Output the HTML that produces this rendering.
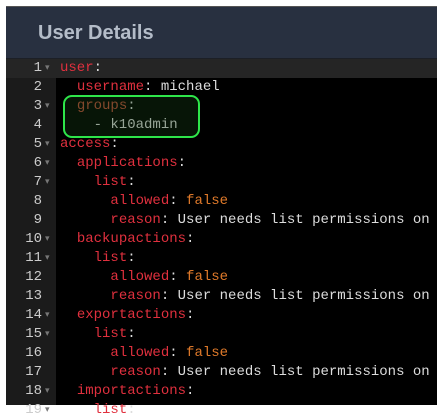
<!DOCTYPE html>
<html><head><style>
body{margin:0;background:#fff;width:437px;height:405px;overflow:hidden;position:relative;font-family:"Liberation Sans",sans-serif}
.p{position:absolute;left:6px;top:6px;right:0;bottom:0;background:#000;border-top:1px solid #555}
.h{height:51px;background:#283040;color:#b4bcc8;font-weight:bold;font-size:20px;line-height:52px;padding-left:32px;border-bottom:1px solid #1c1f26}
.g{position:absolute;left:0;top:52px;width:50px;bottom:0;background:#1b1b1b}
.c{position:absolute;left:0;top:52px;right:0;font-family:"Liberation Mono",monospace;font-size:14px}
.l{height:19px;line-height:19px;position:relative;white-space:pre;color:#ddd}
.l.a{background:#252525}
.n{position:absolute;left:0;width:36px;text-align:right;color:#ccc}
.f{position:absolute;left:39px;color:#777;font-size:9px}
.t{position:absolute;left:54px}
.k{color:#e0303e}.v{color:#e07a2a}.o{color:#ccc}
.bx{position:absolute;left:63px;top:95px;width:133px;height:39px;border:2px solid #2ee64a;border-radius:9px;background:rgba(20,60,20,.35)}
.ig{position:absolute;top:0;bottom:0;width:0;border-left:1px dotted #333}
</style></head><body>
<div class="p"><div class="h">User Details</div><div class="g"></div>
<div class="c">
<div class="l a"><span class="n">1</span><span class="f">▾</span><span class="t"><span class="k">user</span>:</span></div>
<div class="l"><span class="n">2</span><span class="t">  <span class="k">username</span>: michael</span></div>
<div class="l"><span class="n">3</span><span class="f">▾</span><span class="t">  <span class="k" style="color:#c0503a">groups</span>:</span></div>
<div class="l"><span class="n">4</span><span class="t">    - k10admin</span></div>
<div class="l"><span class="n">5</span><span class="f">▾</span><span class="t"><span class="k">access</span>:</span></div>
<div class="l"><span class="n">6</span><span class="f">▾</span><span class="t">  <span class="k">applications</span>:</span></div>
<div class="l"><span class="n">7</span><span class="f">▾</span><span class="t">    <span class="k">list</span>:</span></div>
<div class="l"><span class="n">8</span><span class="t">      <span class="k">allowed</span>: <span class="v">false</span></span></div>
<div class="l"><span class="n">9</span><span class="t">      <span class="k">reason</span>: User needs list permissions on</span></div>
<div class="l"><span class="n">10</span><span class="f">▾</span><span class="t">  <span class="k">backupactions</span>:</span></div>
<div class="l"><span class="n">11</span><span class="f">▾</span><span class="t">    <span class="k">list</span>:</span></div>
<div class="l"><span class="n">12</span><span class="t">      <span class="k">allowed</span>: <span class="v">false</span></span></div>
<div class="l"><span class="n">13</span><span class="t">      <span class="k">reason</span>: User needs list permissions on</span></div>
<div class="l"><span class="n">14</span><span class="f">▾</span><span class="t">  <span class="k">exportactions</span>:</span></div>
<div class="l"><span class="n">15</span><span class="f">▾</span><span class="t">    <span class="k">list</span>:</span></div>
<div class="l"><span class="n">16</span><span class="t">      <span class="k">allowed</span>: <span class="v">false</span></span></div>
<div class="l"><span class="n">17</span><span class="t">      <span class="k">reason</span>: User needs list permissions on</span></div>
<div class="l"><span class="n">18</span><span class="f">▾</span><span class="t">  <span class="k">importactions</span>:</span></div>
<div class="l"><span class="n">19</span><span class="f">▾</span><span class="t">    <span class="k">list</span>:</span></div>
</div></div>
<div class="bx"></div>
</body></html>
